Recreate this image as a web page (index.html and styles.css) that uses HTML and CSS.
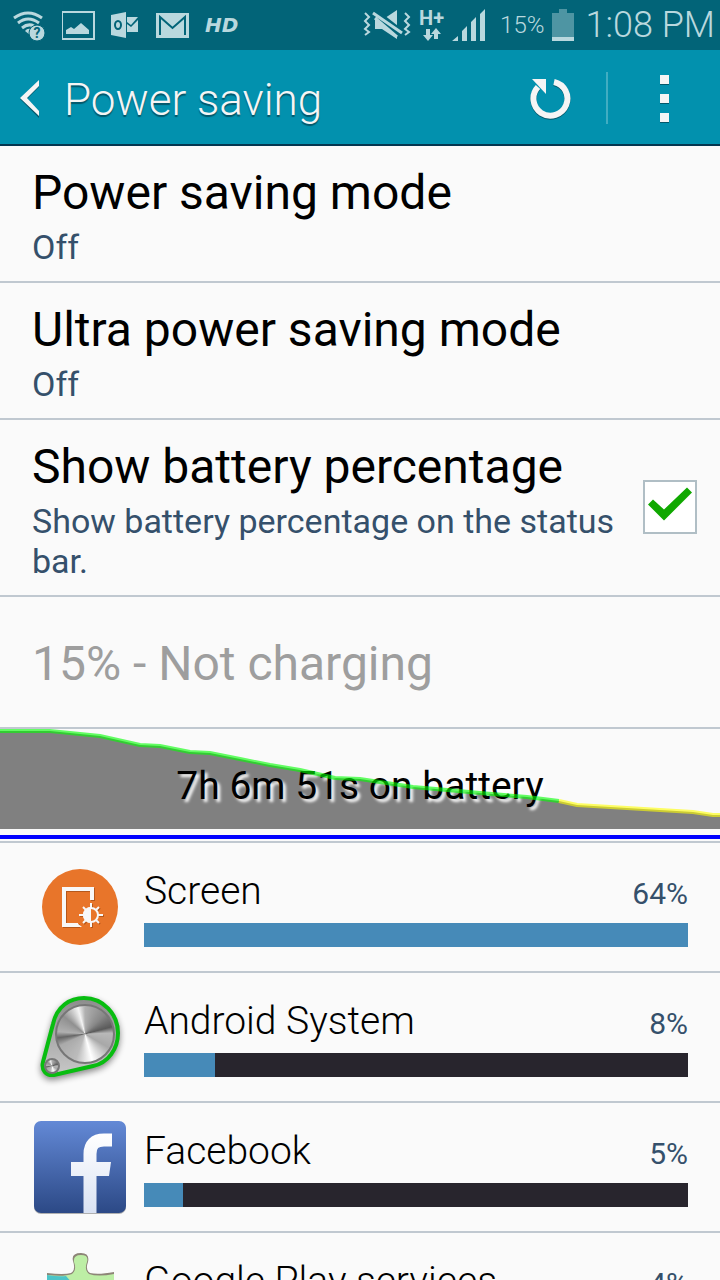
FILE: index.html
```
<!DOCTYPE html>
<html lang="en">
	<head>
		<meta charset="utf-8">
		<meta name="viewport" content="width=device-width, initial-scale=1">
		<title>Power saving</title>
		<link rel="stylesheet" href="styles.css">
	</head>
	<body>
		<div class="statusbar">
			<div class="notifications">
				<!-- wifi -->
				<svg width="34" height="34" viewBox="0 0 34 34">
					<g fill="none" stroke="#b9d8de" stroke-width="3">
						<path d="M1 10Q15 0 29 10"/>
						<path d="M5 15Q15 7 26 15"/>
						<path d="M9 20Q15 15 21 18"/>
					</g>
					<path d="M12 23Q14 20 18 21L17 27Z" fill="#b9d8de"/>
					<circle cx="24" cy="25" r="8" fill="#b9d8de" stroke="#026478"/>
					<text class="wifi-mark" x="24" y="30" text-anchor="middle">?</text>
				</svg>
				<!-- picture -->
				<svg width="34" height="30" viewBox="0 0 34 30">
					<rect x="0" y="2" width="32" height="27" fill="none" stroke="#b9d8de" stroke-width="2"/>
					<path d="M4 24V20L9 17L12 19L19 13L27 20V24Z" fill="#b9d8de"/>
				</svg>
				<!-- outlook -->
				<svg width="30" height="28" viewBox="0 0 30 28">
					<path d="M0 4L15 1V27L0 24Z" fill="#b9d8de"/>
					<ellipse cx="7" cy="14" rx="3" ry="4" fill="none" stroke="#026478" stroke-width="2"/>
					<path d="M16 6H27L20 14L16 11ZM16 13L20 16L27 9V21H16Z" fill="#b9d8de"/>
				</svg>
				<!-- mail -->
				<svg width="34" height="26" viewBox="0 0 34 26">
					<rect x="0" y="1" width="33" height="25" fill="#b9d8de"/>
					<path d="M4 23V5L16.500 16L29 5V23" fill="none" stroke="#026478" stroke-width="2"/>
				</svg>
				<span class="hd">HD</span>
			</div>
			<div class="system">
				<!-- vibrate -->
				<svg width="48" height="32" viewBox="0 0 48 32">
					<path d="M12 11H19L34 1V30L19 20H12Z" fill="#b9d8de"/>
					<path d="M10 3L38 25" stroke="#026478" stroke-width="9"/>
					<path d="M10 4L39 24M12 9L34 28" stroke="#b9d8de" stroke-width="3"/>
					<path d="M2 4L6 8L2 12L6 16L2 20L6 23L2 26M42 4L46 8L42 12L46 16L42 20L46 23L42 26" fill="none" stroke="#b9d8de" stroke-width="2"/>
				</svg>
				<!-- data -->
				<div class="data">
					<span>H+</span>
					<svg width="20" height="14" viewBox="0 0 20 14">
						<path d="M4 1H8V7H11L6 13L1 7H4ZM12 11V6H9L14 0L19 6H16V11Z" fill="#b9d8de"/>
					</svg>
				</div>
				<!-- signal -->
				<svg width="34" height="34" viewBox="0 0 34 34">
					<path d="M0 33L6 28V33ZM10 33V23L15 18V33ZM19 33V14L24 9V33ZM28 33V6L33 1V33Z" fill="#b9d8de"/>
				</svg>
				<span class="percent">15%</span>
				<!-- battery -->
				<svg width="22" height="32" viewBox="0 0 22 32">
					<path d="M7 0H15V4H22V28H0V4H7Z" fill="#4e95a3"/>
					<path d="M0 28H22V32H0Z" fill="#b9d8de"/>
				</svg>
				<span class="clock">1:08 PM</span>
			</div>
		</div>

		<div class="header">
			<button class="back" type="button" aria-label="Back">
				<svg width="20" height="40" viewBox="0 0 20 40">
					<path d="M19 3V9L7 21L19 34V40L0 21Z" fill="#04576a"/>
					<path d="M19 2V8L7 20L19 33V38L0 20Z" fill="#f5f5f5"/>
				</svg>
			</button>
			<h1>Power saving</h1>
			<button class="refresh" type="button" aria-label="Refresh">
				<svg width="42" height="42" viewBox="0 0 42 42">
					<path d="M25 5A17 17 0 1 1 9 10" fill="none" stroke="#04576a" stroke-width="6"/>
					<path d="M25 4A17 17 0 1 1 9 9" fill="none" stroke="#f5f5f5" stroke-width="6"/>
					<path d="M3 1H17V16Z" fill="#f5f5f5"/>
				</svg>
			</button>
			<button class="more" type="button" aria-label="More options"><i></i><i></i><i></i></button>
		</div>

		<div class="list">
			<div class="item">
				<h2>Power saving mode</h2>
				<p>Off</p>
			</div>
			<div class="item">
				<h2>Ultra power saving mode</h2>
				<p>Off</p>
			</div>
			<label class="item check" for="showpercent">
				<span>
					<span class="name">Show battery percentage</span>
					<span class="about">Show battery percentage on the status bar.</span>
				</span>
				<input id="showpercent" type="checkbox" checked>
			</label>
			<div class="item state">15% - Not charging</div>

			<div class="graph">
				<svg class="area" viewBox="0 0 720 112" preserveAspectRatio="none">
					<path d="M0 2L50 2L100 7L140 16L160 17L190 23L210 24L240 30L270 36L300 41L335 49L360 50L393 55L413 58L447 61L480 64L527 68L559 72L577 76L627 79L693 83L713 86H720V100H0Z" fill="#808080"/>
					<path d="M0 106H720V110H0Z" fill="#0000ff"/>
				</svg>
				<p>7h 6m 51s on battery</p>
				<svg class="line" viewBox="0 0 720 112" preserveAspectRatio="none">
					<path d="M0 2L50 2L100 7L140 16L160 17L190 23L210 24L240 30L270 36L300 41L335 49L360 50L393 55L413 58L447 61L480 64L527 68L559 72" stroke="#00ff00"/>
					<path d="M559 72L577 76L627 79L693 83L713 86H720" stroke="#ffff00"/>
				</svg>
			</div>

			<div class="app">
				<!-- screen -->
				<svg class="icon" viewBox="0 0 96 96">
					<circle cx="48" cy="48" r="38" fill="#e8752a"/>
					<g transform="translate(1 1)" stroke="#b4581c" fill="none" stroke-width="4">
						<path d="M60 41V30H32V66H47"/>
						<path d="M59 44V68M47 56H71M51 48L67 64M51 64L67 48" stroke-width="2"/>
					</g>
					<path d="M60 41V30H32V66H46" stroke="#f8f8f8" fill="none" stroke-width="4"/>
					<path d="M45 64L50 68H45Z" fill="#f8f8f8"/>
					<path d="M59 44V68M47 56H71M51 48L67 64M51 64L67 48" stroke="#f8f8f8" stroke-width="2"/>
					<circle cx="59" cy="56" r="7" fill="#e8752a" stroke="#f8f8f8" stroke-width="2"/>
					<path d="M59 48A8 8 0 0 0 59 64Z" fill="#f8f8f8"/>
				</svg>
				<div class="usage">
					<div class="label"><h3>Screen</h3><span>64%</span></div>
					<div class="bar"><div class="fill" style="width:100%"></div></div>
				</div>
			</div>
			<div class="app">
				<!-- android system -->
				<div class="icon system-icon">
					<svg viewBox="0 0 96 96">
						<defs>
							<linearGradient id="metal" x1="0" y1="0" x2="0" y2="1">
								<stop offset="0" stop-color="#8c8c8c"/>
								<stop offset="1" stop-color="#c8c8c8"/>
							</linearGradient>
						</defs>
						<path d="M21 35C25 17 38 9 52 9C71 9 86 25 86 44C86 60 76 74 61 77L22 86C14 87 9 81 11 73Z" fill="url(#metal)" stroke="#08bd10" stroke-width="4"/>
					</svg>
					<div class="dial"></div>
					<div class="knob"></div>
				</div>
				<div class="usage">
					<div class="label"><h3>Android System</h3><span>8%</span></div>
					<div class="bar"><div class="fill" style="width:13%"></div></div>
				</div>
			</div>
			<div class="app">
				<!-- facebook -->
				<svg class="icon" viewBox="0 0 96 96">
					<defs>
						<linearGradient id="fb" x1="0" y1="0" x2="0" y2="1">
							<stop offset="0" stop-color="#6389d6"/>
							<stop offset="1" stop-color="#2c4986"/>
						</linearGradient>
						<linearGradient id="fbmark" gradientUnits="userSpaceOnUse" x1="0" y1="15" x2="0" y2="94">
							<stop offset="0" stop-color="#ffffff"/>
							<stop offset="1" stop-color="#d9e2f3"/>
						</linearGradient>
					</defs>
					<rect x="2" y="3" width="92" height="92" rx="7" fill="#b0b0b0"/>
					<rect x="2" y="2" width="92" height="92" rx="7" fill="url(#fb)"/>
					<path d="M58 94V35Q58 21 72 21H80" fill="none" stroke="url(#fbmark)" stroke-width="13"/>
					<path d="M39 43H79L77 57H39Z" fill="url(#fbmark)"/>
				</svg>
				<div class="usage">
					<div class="label"><h3>Facebook</h3><span>5%</span></div>
					<div class="bar"><div class="fill" style="width:7.2%"></div></div>
				</div>
			</div>
			<div class="app">
				<!-- play services -->
				<svg class="icon" viewBox="0 0 96 96">
					<path d="M15 24Q32 26 39 24Q44 21 41 12Q39 4 49 4Q58 4 56 13Q53 21 58 24Q66 26 82 23V90H15Z" fill="#8d8577"/>
					<path d="M15 26Q32 28 40 25Q45 21 42 13Q41 6 49 6Q57 6 55 13Q52 21 57 25Q66 28 82 25V90H15Z" fill="#bdeea5"/>
					<path d="M15 26Q27 28 34 27L48 43L15 70Z" fill="#4bc4c8"/>
				</svg>
				<div class="usage">
					<div class="label"><h3>Google Play services</h3><span>4%</span></div>
					<div class="bar"><div class="fill" style="width:6%"></div></div>
				</div>
			</div>
		</div>
	</body>
</html>
```
FILE: styles.css
```
*{
	box-sizing:border-box;
}
body{
	margin:0px;
	height:100vh;
	overflow:hidden;
	display:flex;
	flex-direction:column;
	background-color:#fafafa;
	color:#000000;
	font-family:Roboto, sans-serif;
	font-weight:400;
}
h1, h2, h3, p{
	margin:0px;
	font-weight:inherit;
}
svg{
	display:block;
	flex:none;
}
button{
	border:0px;
	padding:0px;
	background:none;
	cursor:pointer;
}

/* status bar */
.statusbar{
	flex:none;
	height:50px;
	padding:0px 5px 0px 13px;
	display:flex;
	align-items:center;
	justify-content:space-between;
	background-color:#026478;
	color:#b9d8de;
	font-weight:300;
	white-space:nowrap;
}
.notifications{
	display:flex;
	align-items:center;
	gap:15px;
}
.hd{
	font-family:"DejaVu Sans", sans-serif;
	font-size:20px;
	font-weight:bold;
	font-style:italic;
}
.wifi-mark{
	font-size:14px;
	font-weight:bold;
	fill:#026478;
}
.system{
	display:flex;
	align-items:center;
	gap:8px;
}
.data{
	display:flex;
	flex-direction:column;
	align-items:center;
	font-size:20px;
	line-height:20px;
	font-weight:bold;
}
.percent{
	padding-left:6px;
	font-size:24px;
}
.clock{
	padding-left:3px;
	font-size:36px;
}

/* action bar */
.header{
	flex:none;
	height:96px;
	padding-left:20px;
	display:flex;
	align-items:center;
	background-color:#0291ae;
	border-bottom:2px solid #04364f;
}
.back{
	padding-top:2px;
}
.header h1{
	flex:1;
	padding:6px 0px 0px 24px;
	font-size:44px;
	font-weight:300;
	color:#f5f5f5;
	text-shadow:0px 2px 1px #04576a;
}
.refresh{
	padding:4px 35px 0px 35px;
}
.more{
	width:114px;
	height:52px;
	margin-top:2px;
	border-left:2px solid #41adc2;
	display:flex;
	flex-direction:column;
	align-items:center;
	justify-content:center;
	gap:10px;
}
.more i{
	width:9px;
	height:9px;
	background-color:#f5f5f5;
	box-shadow:0px 1px 0px #04576a;
}

/* settings */
.list{
	flex:1;
	min-height:0px;
	overflow:hidden;
}
.item{
	padding:18px 23px 14px 32px;
	border-bottom:2px solid #c0c8d0;
}
.item h2, .name{
	display:block;
	font-size:48px;
	line-height:58px;
}
.item p, .about{
	display:block;
	padding-top:5px;
	font-size:34px;
	line-height:40px;
	color:#35506b;
}
.check{
	display:flex;
	align-items:center;
	justify-content:space-between;
	gap:16px;
}
.check input{
	appearance:none;
	flex:none;
	width:54px;
	height:54px;
	margin:0px 0px 6px 0px;
	border:2px solid #b0bec5;
	background-color:#ffffff;
}
.check input:checked::before{
	content:"";
	display:block;
	width:50px;
	height:50px;
	background-color:#10a800;
	clip-path:polygon(3px 23px, 8px 18px, 19px 28px, 42px 6px, 47px 11px, 19px 39px);
}
.state{
	padding:38px 32px 34px 32px;
	font-size:48px;
	line-height:58px;
	color:#9e9e9e;
}

/* battery history */
.graph{
	position:relative;
	height:114px;
	border-bottom:2px solid #c0c8d0;
}
.graph p{
	position:relative;
	padding-top:33px;
	font-size:39px;
	line-height:48px;
	text-align:center;
	text-shadow:3px 3px 3px #ffffff;
}
.area, .line{
	position:absolute;
	top:0px;
	left:0px;
	width:100%;
	height:112px;
}
.line{
	fill:none;
	stroke-width:4px;
	opacity:0.6;
}

/* usage */
.app{
	height:130px;
	padding:0px 32px;
	display:flex;
	align-items:center;
	gap:16px;
	border-bottom:2px solid #c0c8d0;
}
.icon{
	flex:none;
	width:96px;
	height:96px;
}
.usage{
	flex:1;
}
.label{
	display:flex;
	justify-content:space-between;
	align-items:center;
}
.label h3{
	font-size:39px;
	line-height:50px;
	font-weight:300;
}
.label span{
	padding-top:4px;
	font-size:30px;
	color:#35506b;
}
.bar{
	height:24px;
	margin:7px 0px 1px 0px;
	background-color:#28252d;
}
.fill{
	height:24px;
	background-color:#468ab8;
}
.system-icon{
	position:relative;
	filter:drop-shadow(0px 3px 3px #888888);
}
.dial, .knob{
	position:absolute;
	border-radius:50%;
	border:2px solid #777777;
	background:conic-gradient(from 0deg, #b0b0b0, #888888 45deg, #5a5a5a 75deg, #b8b8b8 88deg, #a8a8a8 120deg, #ffffff 165deg, #bbbbbb 200deg, #aaaaaa 245deg, #666666 262deg, #b0b0b0 275deg, #909090 310deg, #f4f4f4 345deg, #b0b0b0);
}
.dial{
	top:15px;
	left:23px;
	width:60px;
	height:60px;
}
.knob{
	top:69px;
	left:12px;
	width:16px;
	height:16px;
}
```
